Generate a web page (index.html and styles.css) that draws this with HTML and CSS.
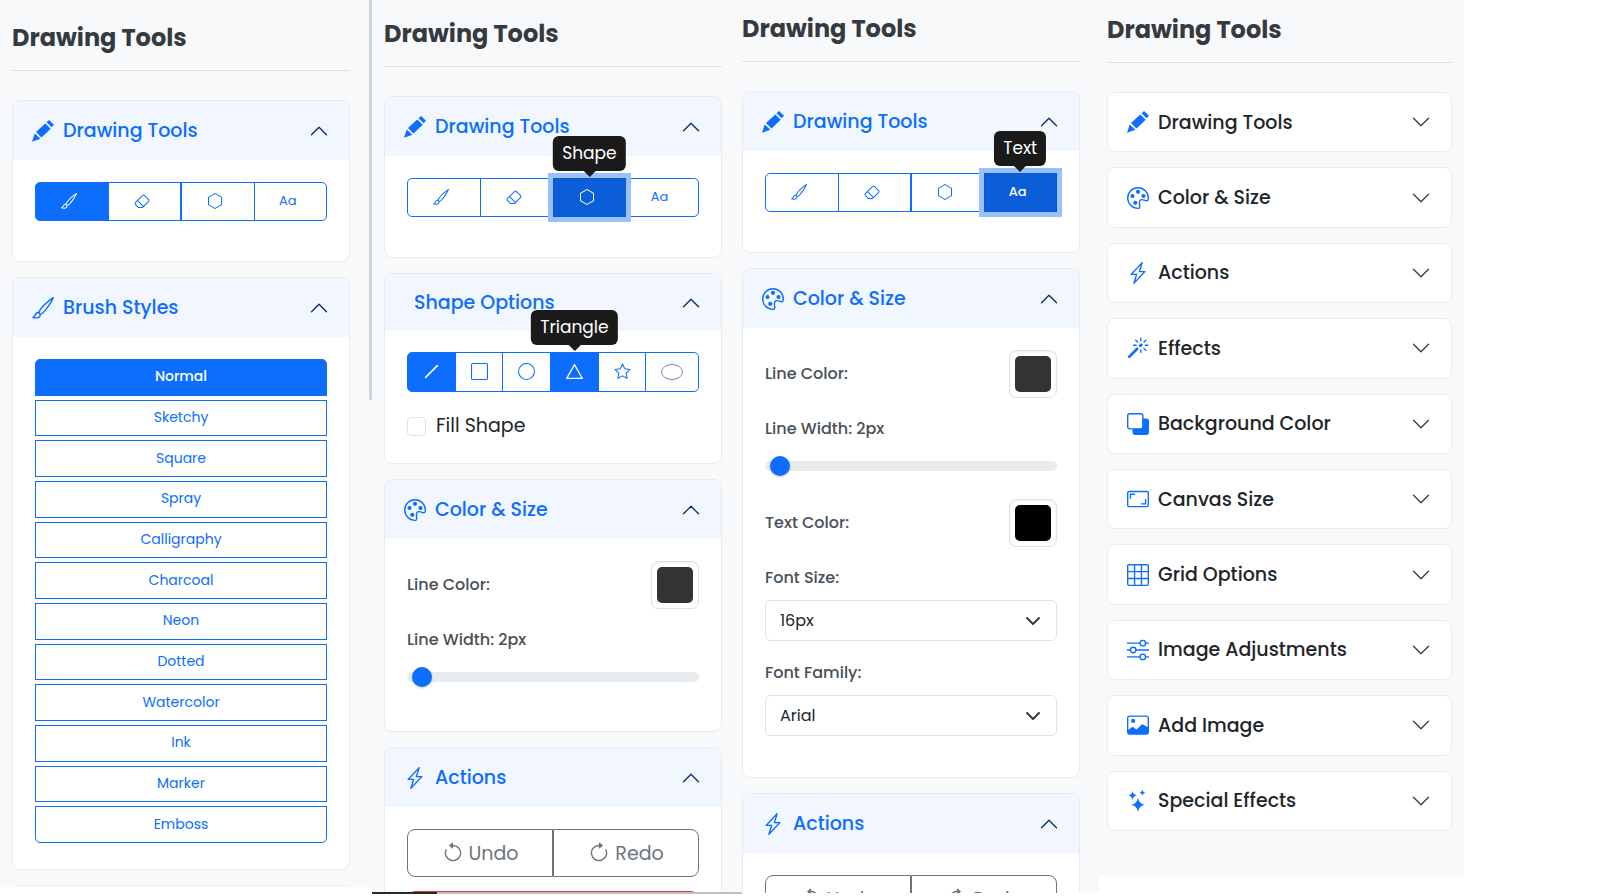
FILE: index.html
```html
<!DOCTYPE html>
<html lang="en">
<head>
<meta charset="utf-8">
<title>Drawing Tools</title>
<link rel="stylesheet" href="styles.css">
</head>
<body>
<svg class="sprite" aria-hidden="true">
  <symbol id="i-pencil" viewBox="0 0 16 16"><path d="M12.4 0 16 3.5 14.300 5.300 10.600 1.700zM9.700 2.500l3.900 3.900-6.700 6.400-4-4zM2 9.800l4.100 3.900L0 15.800z"/></symbol>
  <symbol id="i-brush" viewBox="0 0 16 16"><path d="M15.825.12a.5.5 0 0 1 .132.584c-1.53 3.43-4.743 8.17-7.095 10.64a6.1 6.1 0 0 1-2.373 1.534c-.018.227-.06.538-.16.868-.201.659-.667 1.479-1.708 1.74a8.1 8.1 0 0 1-3.078.132 4 4 0 0 1-.562-.135 1.4 1.4 0 0 1-.466-.247.7.7 0 0 1-.204-.288.62.62 0 0 1 .004-.443c.095-.245.316-.38.461-.452.394-.197.625-.453.867-.826.095-.144.184-.297.287-.472l.117-.198c.151-.255.326-.54.546-.848.528-.739 1.201-.925 1.746-.896q.19.012.348.048c.062-.172.142-.38.238-.608.261-.619.658-1.419 1.187-2.069 2.176-2.67 6.18-6.206 9.117-8.104a.5.5 0 0 1 .596.04M4.705 11.912a1.2 1.2 0 0 0-.419-.1c-.246-.013-.573.05-.879.479-.197.275-.355.532-.5.777l-.105.177c-.106.181-.213.362-.32.528a3.4 3.4 0 0 1-.76.861c.69.112 1.736.111 2.657-.12.559-.139.843-.569.993-1.06a3 3 0 0 0 .126-.75zm1.44.026c.12-.04.277-.1.458-.183a5.100 5.100 0 0 0 1.535-1.100c1.900-1.996 4.412-5.570 6.052-8.631-2.590 1.927-5.566 4.660-7.302 6.792-.442.543-.795 1.243-1.042 1.826-.121.288-.214.540-.275.720v.001l.575.575z"/></symbol>
  <symbol id="i-eraser" viewBox="0 0 16 16"><path d="M8.086 2.207a2 2 0 0 1 2.828 0l3.879 3.879a2 2 0 0 1 0 2.828l-5.500 5.500A2 2 0 0 1 7.879 15H5.120a2 2 0 0 1-1.414-.586l-2.500-2.500a2 2 0 0 1 0-2.828zm2.121.707a1 1 0 0 0-1.414 0L4.160 7.547l5.293 5.293 4.633-4.633a1 1 0 0 0 0-1.414zM8.746 13.547 3.453 8.254 1.914 9.793a1 1 0 0 0 0 1.414l2.500 2.500a1 1 0 0 0 .707.293H7.880a1 1 0 0 0 .707-.293z"/></symbol>
  <symbol id="i-hexagon" viewBox="0 0 16 16"><path d="M14 4.577v6.846L8 15l-6-3.577V4.577L8 1zM8.500.134a1 1 0 0 0-1 0l-6 3.577a1 1 0 0 0-.5.866v6.846a1 1 0 0 0 .5.866l6 3.577a1 1 0 0 0 1 0l6-3.577a1 1 0 0 0 .5-.866V4.577a1 1 0 0 0-.5-.866z"/></symbol>
  <symbol id="i-palette" viewBox="0 0 16 16"><path d="M8 5a1.500 1.500 0 1 0 0-3 1.500 1.500 0 0 0 0 3m4 3a1.500 1.500 0 1 0 0-3 1.500 1.500 0 0 0 0 3M5.500 6.500a1.500 1.500 0 1 1-3 0 1.500 1.500 0 0 1 3 0m.5 6.500a1.500 1.500 0 1 0 0-3 1.500 1.500 0 0 0 0 3"/><path d="M16 8c0 3.150-1.866 2.585-3.567 2.070C11.420 9.763 10.465 9.473 10 10c-.603.683-.475 1.819-.351 2.920C9.826 14.495 9.996 16 8 16a8 8 0 1 1 8-8m-8 7c.611 0 .654-.171.655-.176.078-.146.124-.464.070-1.119-.014-.168-.037-.370-.061-.591-.052-.464-.112-1.005-.118-1.462-.010-.707.083-1.610.704-2.314.369-.417.845-.578 1.272-.618.404-.038.812.026 1.160.104.343.077.702.186 1.025.284l.028.008c.346.105.658.199.953.266.653.148.904.083.991.024C14.717 9.380 15 9.161 15 8a7 7 0 1 0-7 7"/></symbol>
  <symbol id="i-bolt" viewBox="0 0 16 16"><path d="M11.251.068a.5.5 0 0 1 .227.580L9.677 6.500H13a.5.5 0 0 1 .364.843l-8 8.500a.5.5 0 0 1-.842-.490L6.323 9.500H3a.5.5 0 0 1-.364-.843l8-8.500a.5.5 0 0 1 .615-.090zM4.157 8.500H7a.5.5 0 0 1 .478.647L6.110 13.590l5.732-6.090H9a.5.5 0 0 1-.478-.647L9.890 2.410z"/></symbol>
  <symbol id="i-magic" viewBox="0 0 16 16"><path d="M9.500 2.672a.5.5 0 1 0 1 0V.843a.5.5 0 0 0-1 0zm4.500.035A.5.5 0 0 0 13.293 2L12 3.293a.5.5 0 1 0 .707.707zM7.293 4A.5.5 0 1 0 8 3.293L6.707 2A.5.5 0 0 0 6 2.707zm-.621 2.500a.5.5 0 1 0 0-1H4.843a.5.5 0 1 0 0 1zm8.485 0a.5.5 0 1 0 0-1h-1.829a.5.5 0 0 0 0 1zM13.293 10A.5.5 0 1 0 14 9.293L12.707 8a.5.5 0 1 0-.707.707zM9.500 11.157a.5.5 0 0 0 1 0V9.328a.5.5 0 0 0-1 0zm1.854-5.097a.5.5 0 0 0 0-.706l-.708-.708a.5.5 0 0 0-.707 0L8.646 5.940a.5.5 0 0 0 0 .707l.708.708a.5.5 0 0 0 .707 0zm-3 3a.5.5 0 0 0 0-.706l-.708-.708a.5.5 0 0 0-.707 0L.646 13.940a.5.5 0 0 0 0 .707l.707.707a.5.5 0 0 0 .707 0z"/></symbol>
  <symbol id="i-layers" viewBox="0 0 16 16"><path fill-rule="evenodd" d="M2 0h8a2 2 0 0 1 2 2v2h2a2 2 0 0 1 2 2v8a2 2 0 0 1-2 2H6a2 2 0 0 1-2-2v-2H2a2 2 0 0 1-2-2V2a2 2 0 0 1 2-2m0 1a1 1 0 0 0-1 1v8a1 1 0 0 0 1 1h8a1 1 0 0 0 1-1V2a1 1 0 0 0-1-1z"/></symbol>
  <symbol id="i-aspect" viewBox="0 0 16 16"><g fill="none" stroke="currentColor"><rect x=".5" y="2.500" width="15" height="11" rx="1"/><path d="M2.500 7.500v-3h3M13.500 8.500v3h-3" stroke-linecap="round"/></g></symbol>
  <symbol id="i-grid" viewBox="0 0 16 16"><path fill="none" stroke="currentColor" d="M1.500.5h13a1 1 0 0 1 1 1v13a1 1 0 0 1-1 1h-13a1 1 0 0 1-1-1v-13a1 1 0 0 1 1-1M5.500.5v15M10.500.5v15M.5 5.500h15M.5 10.500h15"/></symbol>
  <symbol id="i-sliders" viewBox="0 0 16 16"><g fill="none" stroke="currentColor"><circle cx="11.500" cy="3" r="2"/><circle cx="4.500" cy="8" r="2"/><circle cx="11.500" cy="13" r="2"/><path d="M0 3h9.500M13.500 3H16M0 8h2.500M6.500 8H16M0 13h9.500M13.500 13H16"/></g></symbol>
  <symbol id="i-image" viewBox="0 0 16 16"><path fill-rule="evenodd" d="M2 1h12a2 2 0 0 1 2 2v10a2 2 0 0 1-2 2H2a2 2 0 0 1-2-2V3a2 2 0 0 1 2-2m0 1a1 1 0 0 0-1 1v8.600l2.650-2.100a.5.5 0 0 1 .630 0l2.660 1.770 3.700-3.700a.5.5 0 0 1 .580-.100L15 9.500V3a1 1 0 0 0-1-1z"/><circle cx="4.500" cy="5" r="1.500"/></symbol>
  <symbol id="i-stars" viewBox="0 0 16 16"><path d="M8 5.800q.9 4.200 5 5-4.100.8-5 5-.9-4.200-5-5 4.100-.8 5-5M4 .8q.5 2.700 3 3.200-2.500.5-3 3.200Q3.500 4.500 1.200 4 3.500 3.500 4 .8M11.200 0q.3 1.600 2 2-1.700.4-2 2-.3-1.600-2-2 1.700-.4 2-2"/></symbol>
  <symbol id="i-line" viewBox="0 0 16 16"><path d="M2.500 13.500 13.500 2.500" fill="none" stroke="currentColor" stroke-width="1.500" stroke-linecap="round"/></symbol>
  <symbol id="i-square" viewBox="0 0 16 16"><rect x=".5" y=".5" width="15" height="15" rx="1" fill="none" stroke="currentColor"/></symbol>
  <symbol id="i-circle" viewBox="0 0 16 16"><circle cx="8" cy="8" r="7.500" fill="none" stroke="currentColor"/></symbol>
  <symbol id="i-triangle" viewBox="0 0 16 16"><path d="M8 1.500 15.300 14.500H.7z" fill="none" stroke="currentColor" stroke-width="1.200" stroke-linejoin="round"/></symbol>
  <symbol id="i-star" viewBox="0 0 16 16"><path d="m8 .9 2.150 4.450 4.900.7-3.550 3.450.85 4.900L8 12.100l-4.350 2.300.85-4.900L.95 6.050l4.900-.7z" fill="none" stroke="currentColor" stroke-linejoin="round"/></symbol>
  <symbol id="i-ellipse" viewBox="0 0 22 16"><ellipse cx="11" cy="8" rx="10.500" ry="7.500" fill="none" stroke="#6f86cf"/></symbol>
  <symbol id="i-undo" viewBox="0 0 16 16"><path d="M8 3a5 5 0 1 1-4.546 2.914.5.5 0 0 0-.908-.417A6 6 0 1 0 8 2z"/><path d="M8 4.466V.534a.25.25 0 0 0-.410-.192L5.230 2.308a.25.25 0 0 0 0 .384l2.360 1.966A.25.25 0 0 0 8 4.466"/></symbol>
  <symbol id="i-redo" viewBox="0 0 16 16"><path d="M8 3a5 5 0 1 0 4.546 2.914.5.5 0 0 1 .908-.417A6 6 0 1 1 8 2z"/><path d="M8 4.466V.534a.25.25 0 0 1 .410-.192l2.360 1.966c.120.100.120.284 0 .384L8.410 4.658A.25.25 0 0 1 8 4.466"/></symbol>
  <symbol id="i-down" viewBox="0 0 16 16"><path d="m2 5 6 6 6-6" fill="none" stroke="currentColor" stroke-linecap="round" stroke-linejoin="round"/></symbol>
  <symbol id="i-up" viewBox="0 0 16 16"><path d="m2 11 6-6 6 6" fill="none" stroke="currentColor" stroke-linecap="round" stroke-linejoin="round"/></symbol>
  <symbol id="i-caret" viewBox="0 0 16 16"><path d="m2 5 6 6 6-6" fill="none" stroke="currentColor" stroke-width="2" stroke-linecap="round" stroke-linejoin="round"/></symbol>
</svg>

<main class="board">
  <section class="panel panel-brush">
    <div class="panel-content">
      <h1 class="title">Drawing Tools</h1>
      <div class="card">
        <button class="card-head open" aria-expanded="true"><svg class="ico"><use href="#i-pencil"/></svg><span>Drawing Tools</span><svg class="chev"><use href="#i-up"/></svg></button>
        <div class="card-body">
          <div class="group tools">
            <button class="tool active" aria-label="Brush"><svg class="sm"><use href="#i-brush"/></svg></button>
            <button class="tool" aria-label="Eraser"><svg class="sm"><use href="#i-eraser"/></svg></button>
            <button class="tool split" aria-label="Shape"><svg class="sm"><use href="#i-hexagon"/></svg></button>
            <button class="tool">Aa</button>
          </div>
        </div>
      </div>
      <div class="card">
        <button class="card-head open" aria-expanded="true"><svg class="ico"><use href="#i-brush"/></svg><span>Brush Styles</span><svg class="chev"><use href="#i-up"/></svg></button>
        <div class="card-body">
          <div class="styles">
            <button class="style active">Normal</button>
            <button class="style">Sketchy</button>
            <button class="style">Square</button>
            <button class="style">Spray</button>
            <button class="style">Calligraphy</button>
            <button class="style">Charcoal</button>
            <button class="style">Neon</button>
            <button class="style">Dotted</button>
            <button class="style">Watercolor</button>
            <button class="style">Ink</button>
            <button class="style">Marker</button>
            <button class="style">Emboss</button>
          </div>
        </div>
      </div>
      <div class="card"><div class="card-body"></div></div>
    </div>
    <div class="scrollbar"></div>
  </section>

  <section class="panel panel-shape">
    <div class="panel-content">
      <h1 class="title">Drawing Tools</h1>
      <div class="card">
        <button class="card-head open" aria-expanded="true"><svg class="ico"><use href="#i-pencil"/></svg><span>Drawing Tools</span><svg class="chev"><use href="#i-up"/></svg></button>
        <div class="card-body">
          <div class="group tools">
            <button class="tool" aria-label="Brush"><svg class="sm"><use href="#i-brush"/></svg></button>
            <button class="tool" aria-label="Eraser"><svg class="sm"><use href="#i-eraser"/></svg></button>
            <button class="tool focused" aria-describedby="tip-shape"><svg class="sm"><use href="#i-hexagon"/></svg><span class="tip" id="tip-shape" role="tooltip">Shape</span></button>
            <button class="tool">Aa</button>
          </div>
        </div>
      </div>
      <div class="card">
        <button class="card-head open bare" aria-expanded="true"><span>Shape Options</span><svg class="chev"><use href="#i-up"/></svg></button>
        <div class="card-body">
          <div class="group shapes">
            <button class="shape active" aria-label="Line"><svg class="md"><use href="#i-line"/></svg></button>
            <button class="shape" aria-label="Rectangle"><svg class="md"><use href="#i-square"/></svg></button>
            <button class="shape" aria-label="Circle"><svg class="md"><use href="#i-circle"/></svg></button>
            <button class="shape active" aria-describedby="tip-triangle"><svg class="md"><use href="#i-triangle"/></svg><span class="tip" id="tip-triangle" role="tooltip">Triangle</span></button>
            <button class="shape" aria-label="Star"><svg class="md"><use href="#i-star"/></svg></button>
            <button class="shape" aria-label="Ellipse"><svg class="wide"><use href="#i-ellipse"/></svg></button>
          </div>
          <label class="check"><input type="checkbox">Fill Shape</label>
        </div>
      </div>
      <div class="card">
        <button class="card-head open" aria-expanded="true"><svg class="ico"><use href="#i-palette"/></svg><span>Color &amp; Size</span><svg class="chev"><use href="#i-up"/></svg></button>
        <div class="card-body">
          <div class="color-row"><label class="label" for="lc2">Line Color:</label><input type="color" id="lc2" value="#333333"></div>
          <div class="range-field"><label class="label" for="lw2">Line Width: 2px</label><input type="range" id="lw2" min="1" max="60" value="2"></div>
        </div>
      </div>
      <div class="card">
        <button class="card-head open" aria-expanded="true"><svg class="ico"><use href="#i-bolt"/></svg><span>Actions</span><svg class="chev"><use href="#i-up"/></svg></button>
        <div class="card-body">
          <div class="group history">
            <button class="act"><svg class="lg"><use href="#i-undo"/></svg>Undo</button>
            <button class="act"><svg class="lg"><use href="#i-redo"/></svg>Redo</button>
          </div>
          <button class="clear" aria-label="Clear"></button>
        </div>
      </div>
    </div>
    <div class="footline"></div>
  </section>

  <section class="panel panel-text">
    <div class="panel-content">
      <h1 class="title">Drawing Tools</h1>
      <div class="card">
        <button class="card-head open" aria-expanded="true"><svg class="ico"><use href="#i-pencil"/></svg><span>Drawing Tools</span><svg class="chev"><use href="#i-up"/></svg></button>
        <div class="card-body">
          <div class="group tools">
            <button class="tool" aria-label="Brush"><svg class="sm"><use href="#i-brush"/></svg></button>
            <button class="tool" aria-label="Eraser"><svg class="sm"><use href="#i-eraser"/></svg></button>
            <button class="tool split" aria-label="Shape"><svg class="sm"><use href="#i-hexagon"/></svg></button>
            <button class="tool focused" aria-describedby="tip-text">Aa<span class="tip" id="tip-text" role="tooltip">Text</span></button>
          </div>
        </div>
      </div>
      <div class="card">
        <button class="card-head open" aria-expanded="true"><svg class="ico"><use href="#i-palette"/></svg><span>Color &amp; Size</span><svg class="chev"><use href="#i-up"/></svg></button>
        <div class="card-body">
          <div class="color-row"><label class="label" for="lc3">Line Color:</label><input type="color" id="lc3" value="#333333"></div>
          <div class="range-field"><label class="label" for="lw3">Line Width: 2px</label><input type="range" id="lw3" min="1" max="60" value="2"></div>
          <div class="color-row"><label class="label" for="tc3">Text Color:</label><input type="color" id="tc3" value="#000000"></div>
          <div class="select-field"><label class="label" for="fs3">Font Size:</label><div class="select"><select id="fs3"><option>16px</option></select><svg class="caret"><use href="#i-caret"/></svg></div></div>
          <div class="select-field"><label class="label" for="ff3">Font Family:</label><div class="select"><select id="ff3"><option>Arial</option></select><svg class="caret"><use href="#i-caret"/></svg></div></div>
        </div>
      </div>
      <div class="card">
        <button class="card-head open" aria-expanded="true"><svg class="ico"><use href="#i-bolt"/></svg><span>Actions</span><svg class="chev"><use href="#i-up"/></svg></button>
        <div class="card-body">
          <div class="group history">
            <button class="act"><svg class="lg"><use href="#i-undo"/></svg>Undo</button>
            <button class="act"><svg class="lg"><use href="#i-redo"/></svg>Redo</button>
          </div>
        </div>
      </div>
    </div>
  </section>

  <section class="panel panel-closed">
    <div class="panel-content">
      <h1 class="title">Drawing Tools</h1>
      <div class="closed-list">
        <div class="card"><button class="card-head" aria-expanded="false"><svg class="ico"><use href="#i-pencil"/></svg><span>Drawing Tools</span><svg class="chev"><use href="#i-down"/></svg></button></div>
        <div class="card"><button class="card-head" aria-expanded="false"><svg class="ico"><use href="#i-palette"/></svg><span>Color &amp; Size</span><svg class="chev"><use href="#i-down"/></svg></button></div>
        <div class="card"><button class="card-head" aria-expanded="false"><svg class="ico"><use href="#i-bolt"/></svg><span>Actions</span><svg class="chev"><use href="#i-down"/></svg></button></div>
        <div class="card"><button class="card-head" aria-expanded="false"><svg class="ico"><use href="#i-magic"/></svg><span>Effects</span><svg class="chev"><use href="#i-down"/></svg></button></div>
        <div class="card"><button class="card-head" aria-expanded="false"><svg class="ico"><use href="#i-layers"/></svg><span>Background Color</span><svg class="chev"><use href="#i-down"/></svg></button></div>
        <div class="card"><button class="card-head" aria-expanded="false"><svg class="ico"><use href="#i-aspect"/></svg><span>Canvas Size</span><svg class="chev"><use href="#i-down"/></svg></button></div>
        <div class="card"><button class="card-head" aria-expanded="false"><svg class="ico"><use href="#i-grid"/></svg><span>Grid Options</span><svg class="chev"><use href="#i-down"/></svg></button></div>
        <div class="card"><button class="card-head" aria-expanded="false"><svg class="ico"><use href="#i-sliders"/></svg><span>Image Adjustments</span><svg class="chev"><use href="#i-down"/></svg></button></div>
        <div class="card"><button class="card-head" aria-expanded="false"><svg class="ico"><use href="#i-image"/></svg><span>Add Image</span><svg class="chev"><use href="#i-down"/></svg></button></div>
        <div class="card"><button class="card-head" aria-expanded="false"><svg class="ico"><use href="#i-stars"/></svg><span>Special Effects</span><svg class="chev"><use href="#i-down"/></svg></button></div>
      </div>
    </div>
  </section>
</main>
</body>
</html>
```

FILE: styles.css
```css
*, *::before, *::after { box-sizing: border-box; }

body {
  margin: 0;
  background: #fff;
  color: #212529;
  font-family: Poppins, Inter, sans-serif;
  overflow: hidden;
}

button, input, select { font-family: inherit; margin: 0; }
svg { display: block; flex: none; fill: currentColor; }
.sprite { position: absolute; width: 0; height: 0; }

.board {
  display: grid;
  grid-template-columns: 372fr 370fr 357fr 365fr 148fr;
  height: 100vh;
}

.panel { min-width: 0; min-height: 0; background: #f8f9fa; overflow: hidden; display: flex; }
.panel-content { flex: 1; min-width: 0; min-height: 0; }
.panel-brush { margin-bottom: 9px; }
.panel-brush .panel-content { padding: 22px 19px 0 12px; }
.panel-shape { flex-direction: column; margin-bottom: 2px; }
.panel-shape .panel-content { padding: 18px 20px 0 12px; overflow: hidden; }
.panel-text { margin-bottom: 3px; }
.panel-text .panel-content { padding: 13px 19px 0 0; }
.panel-closed { margin-bottom: 19px; }
.panel-closed .panel-content { padding: 14px 12px 0 8px; }

.scrollbar { width: 3px; height: 400px; background: #ced4da; border-radius: 0 0 3px 3px; }
.footline { flex: none; height: 2px; background: linear-gradient(to right, #262a1f 65px, #bfbfbf 65px); }

.title {
  margin: 0 0 29px;
  padding-bottom: 16px;
  border-bottom: 1px solid #dee2e6;
  color: #343a40;
  font-size: 24px;
  font-weight: 700;
  line-height: 32px;
}

.card {
  margin-bottom: 15px;
  background: #fff;
  border: 1px solid #e9ecef;
  border-radius: 8px;
}
.card-head {
  display: flex;
  align-items: center;
  gap: 9px;
  width: 100%;
  height: 59px;
  padding: 0 20px 0 19px;
  border: 0;
  border-radius: 7px;
  background: #fff;
  color: #212529;
  font-size: 19px;
  font-weight: 500;
  text-align: left;
}
.card-head span { flex: 1; }
.card-head.open { background: #f1f6ff; color: #0d6efd; border-radius: 7px 7px 0 0; }
.card-head.bare { height: 57px; padding-left: 29px; }
.ico { width: 22px; height: 22px; color: #0d6efd; }
.chev { width: 20px; height: 20px; color: #343a40; }
.open .chev { color: #052c65; }
.card-body { padding: 22px 22px 21px; }
.bare + .card-body { padding-top: 21px; }

.closed-list { display: grid; grid-auto-rows: 1fr; gap: 15px; height: 739px; }
.closed-list .card { margin: 0; }
.closed-list .card-head { height: 100%; }

.sm { width: 16px; height: 16px; }
.md { width: 17px; height: 17px; }
.lg { width: 22px; height: 22px; }
.wide { width: 22px; height: 16px; }

.group { display: flex; }
.tool, .shape {
  position: relative;
  display: flex;
  align-items: center;
  justify-content: center;
  border: 1px solid #0d6efd;
  background: #fff;
  color: #0d6efd;
}
.tools { margin-bottom: 19px; }
.tool { flex: 1; height: 39px; padding: 0 5px 2px 0; font-size: 13px; }
.tool + .tool, .shape + .shape { margin-left: -1px; }
.tool.split { margin-left: 0; }
.tool:first-child, .shape:first-child { border-radius: 5px 0 0 5px; }
.tool:last-child, .shape:last-child { border-radius: 0 5px 5px 0; }
.tool.active, .shape.active { background: #0d6efd; color: #fff; }
.tool.focused {
  z-index: 1;
  border-color: #0a58ca;
  border-radius: 0;
  background: #0b5ed7;
  color: #fff;
  font-weight: 500;
  box-shadow: 0 0 0 5px #98c1fe;
}

.tip {
  position: absolute;
  z-index: 2;
  left: 50%;
  bottom: calc(100% + 8px);
  transform: translateX(-50%);
  padding: 0 9px;
  border-radius: 6px;
  background: #1a1a1a;
  color: #fff;
  font-size: 17px;
  font-weight: 400;
  line-height: 35px;
}
.tip::after {
  content: "";
  position: absolute;
  top: 100%;
  left: 50%;
  margin-left: -6px;
  border: 6px solid transparent;
  border-top-color: #1a1a1a;
  border-bottom: 0;
}

.shape { flex: 1 1 auto; height: 40px; padding: 0 0 1px; }
.check { display: flex; align-items: center; gap: 10px; margin: 22px 0 4px; font-size: 19px; line-height: 24px; }
.check input {
  appearance: none;
  width: 19px;
  height: 19px;
  border: 1px solid #dee2e6;
  border-radius: 4px;
  background: #fff;
}

.styles { display: grid; grid-auto-rows: 1fr; gap: 4px; height: 484px; margin-bottom: 5px; }
.style {
  padding: 0 0 1px;
  border: 1px solid #0d6efd;
  background: #fff;
  color: #0d6efd;
  font-size: 14px;
}
.style:first-child { border-radius: 5px 5px 0 0; }
.style:last-child { border-radius: 0 0 5px 5px; }
.style.active { background: #0d6efd; color: #fff; font-weight: 500; }

.label { color: #495057; font-size: 16px; font-weight: 500; line-height: 24px; }
.color-row { display: flex; align-items: center; justify-content: space-between; margin-bottom: 19px; }
input[type="color"] {
  appearance: none;
  width: 48px;
  height: 48px;
  padding: 5px;
  border: 1px solid #dee2e6;
  border-radius: 7px;
  background: #fff;
  box-shadow: inset 0 1px 3px #00000013;
}
input[type="color"]::-webkit-color-swatch-wrapper { padding: 0; }
input[type="color"]::-webkit-color-swatch { border: 0; border-radius: 5px; }

.range-field { display: flex; flex-direction: column; gap: 15px; margin-bottom: 23px; }
input[type="range"] { appearance: none; width: 100%; height: 20px; background: none; }
input[type="range"]::-webkit-slider-runnable-track { height: 10px; border-radius: 5px; background: #e9ecef; }
input[type="range"]::-webkit-slider-thumb {
  appearance: none;
  width: 20px;
  height: 20px;
  margin-top: -5px;
  border-radius: 50%;
  background: #0d6efd;
  box-shadow: 0 1px 3px #00000033;
}

.select-field { display: flex; flex-direction: column; gap: 10px; margin-bottom: 20px; }
.select { display: grid; align-items: center; }
.select > * { grid-area: 1 / 1; }
.select select {
  appearance: none;
  width: 100%;
  height: 41px;
  padding: 0 14px;
  border: 1px solid #dee2e6;
  border-radius: 6px;
  background: #fff;
  color: #212529;
  font-size: 16px;
}
.caret { width: 16px; height: 16px; margin-right: 16px; justify-self: end; color: #343a40; pointer-events: none; }

.act {
  display: flex;
  flex: 1;
  align-items: center;
  justify-content: center;
  gap: 5px;
  height: 48px;
  border: 1px solid #6c757d;
  background: #fff;
  color: #6c757d;
  font-size: 19px;
}
.act:first-child { border-radius: 8px 0 0 8px; }
.act:last-child { border-radius: 0 8px 8px 0; }
.clear { display: block; width: 100%; height: 48px; margin-top: 14px; border: 1px solid #dc3545; border-radius: 8px; background: #fff; }
```
